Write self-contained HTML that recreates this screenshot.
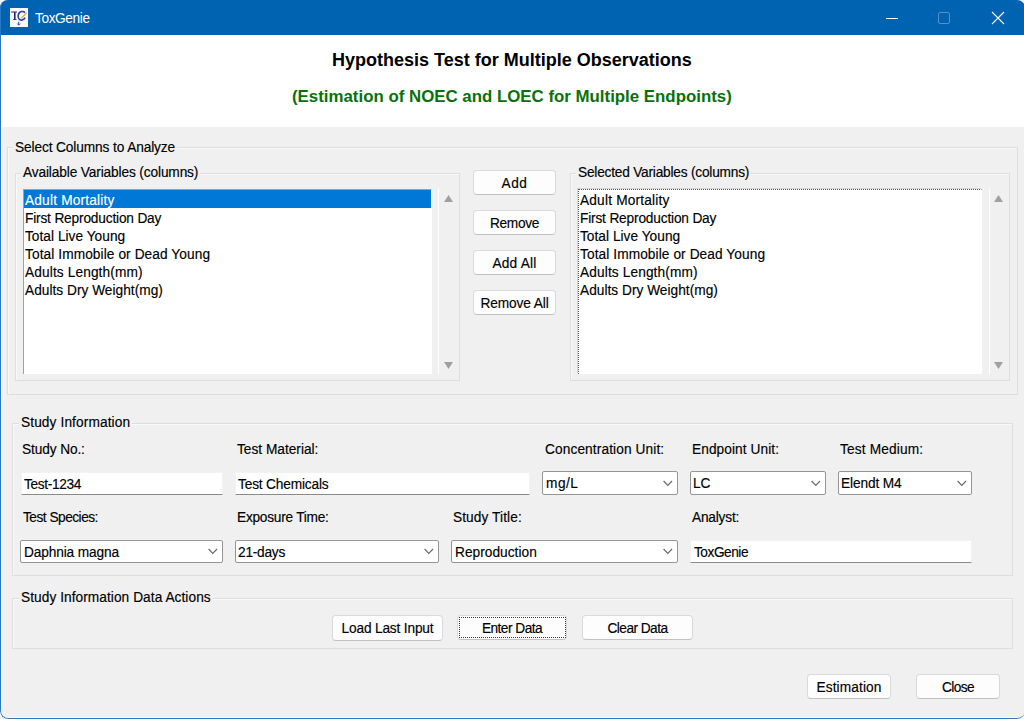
<!DOCTYPE html>
<html><head><meta charset="utf-8"><title>ToxGenie</title><style>
*{margin:0;padding:0;box-sizing:border-box}
html,body{width:1024px;height:719px;overflow:hidden;background:#f3f3f3}
body{position:relative;font-family:"Liberation Sans",sans-serif}
#win{position:absolute;left:0;top:0;width:1025px;height:719px;background:#f0f0f0;border-radius:8px;overflow:hidden}
#wb2{position:absolute;left:1px;top:35px;width:1024px;height:683px;border-radius:0 0 0 7px;border-left:1px solid #fbfbfb;border-bottom:1px solid #fbfbfb;z-index:9}
#wb{position:absolute;left:0;top:0;width:1025px;height:719px;border-radius:8px;border-left:1px solid #2a78c2;border-bottom:1px solid #2a78c2;z-index:10}
#tb{position:absolute;left:0;top:0;width:1025px;height:35px;background:#0063b1}
#hdr{position:absolute;left:1px;top:35px;width:1030px;height:92px;background:#fff}
.t{position:absolute;font-size:13.7px;line-height:13px;white-space:nowrap;color:#000;transform:scaleY(1.1);transform-origin:0 11px;-webkit-text-stroke:0.15px currentColor}
.h1{position:absolute;font-size:18px;line-height:18px;font-weight:bold;white-space:nowrap;color:#000}
.h2{position:absolute;font-size:16.85px;line-height:16.8px;font-weight:bold;white-space:nowrap;color:#0a700a}
.grp{position:absolute;border:1px solid #dedede;box-shadow:inset 1px 1px 0 #f9f9f9}
.gl{background:#f0f0f0;color:#000}
.lb{position:absolute;background:#fff;border-left:1px solid #a0a0a0;border-top:1px solid #a0a0a0;border-right:1px solid #fff}
.lbf{border-left:1px dotted #5a5a5a;border-top:1px dotted #5a5a5a;box-shadow:-1px -1px 0 rgba(160,160,160,.35)}
.sel{position:absolute;background:#0078d7}
.wl{position:absolute;background:#fff}
.arr{position:absolute}
.chev{position:absolute}
.btn{position:absolute;background:#fdfdfd;border:1px solid #d9d9d9;border-bottom-color:#c2c2c2;border-radius:4px;font-size:13.7px;line-height:13px;text-align:center;padding-top:6px;white-space:nowrap;color:#000}
.bt{display:inline-block;transform:scaleY(1.1);transform-origin:0 11px;-webkit-text-stroke:0.15px currentColor}
.focus{position:absolute;border:1px dotted #3a3a3a}
.ent{position:absolute;background:#fff;border:1px solid #f2f2f2;border-bottom:1px solid #8a8a8a;border-radius:2px 2px 0 0}
.cmb{position:absolute;background:#fff;border:1px solid #959595;border-radius:2px}
</style></head>
<body><div id="win">
<div id="tb"></div>
<svg style="position:absolute;left:10px;top:8px" width="18" height="19" viewBox="0 0 18 19"><rect width="18" height="19" fill="#fafbfc"/><path d="M1.2 3.4 H7 V4.6 H5.6 V11.2 H6.6 V11.9 H3 V11.2 H4 V4.6 H1.2Z" fill="#1d2b6c"/><path d="M15 4.6 C13.6 3 9.2 2.6 8.2 7 C7.6 10.6 9.6 12.6 12.2 12 C13.4 11.6 14.6 10.6 15 9.6" fill="none" stroke="#2a42a0" stroke-width="1.6"/><path d="M16.6 4.8 L11.3 10.2" stroke="#eaa45a" stroke-width="1.3"/><path d="M8.7 13.8 V16.8 M7.3 15.6 L8.7 17.2 L10.1 15.6" fill="none" stroke="#2a4ab0" stroke-width="1"/></svg>
<div class="t" style="left:35px;top:12px;color:#fff;letter-spacing:-0.4px;-webkit-text-stroke:0">ToxGenie</div>
<div style="position:absolute;left:886px;top:18px;width:12px;height:1px;background:#fff"></div>
<div style="position:absolute;left:938px;top:12px;width:12px;height:12px;border:1px solid #5b8fc7;border-radius:2px"></div>
<svg style="position:absolute;left:991px;top:11px" width="14" height="14" viewBox="0 0 14 14"><path d="M1 1 L13 13 M13 1 L1 13" stroke="#fff" stroke-width="1.1"/></svg>
<div id="hdr"></div>
<div class="h1" style="left:332px;top:51px">Hypothesis Test for Multiple Observations</div>
<div class="h2" style="left:292px;top:89px">(Estimation of NOEC and LOEC for Multiple Endpoints)</div>
<div class="grp" style="left:7px;top:147px;width:1011px;height:248px;"></div>
<div class="t gl" style="left:13px;top:141px;padding:0 2px;letter-spacing:-0.11px">Select Columns to Analyze</div>
<div class="grp" style="left:15px;top:173px;width:445px;height:208px;"></div>
<div class="t gl" style="left:21px;top:166px;padding:0 2px;letter-spacing:-0.13px">Available Variables (columns)</div>
<div class="grp" style="left:570px;top:173px;width:440px;height:208px;"></div>
<div class="t gl" style="left:576px;top:166px;padding:0 2px;letter-spacing:-0.21px">Selected Variables (columns)</div>
<div class="lb" style="left:23px;top:189px;width:409px;height:185px;"></div>
<div class="sel" style="left:24px;top:190px;width:407px;height:18px;"></div>
<div class="t" style="left:25px;top:193.5px;letter-spacing:0.19px;color:#fff">Adult Mortality</div>
<div class="t" style="left:25px;top:211.5px;letter-spacing:-0.17px;">First Reproduction Day</div>
<div class="t" style="left:25px;top:229.5px;letter-spacing:0.03px;">Total Live Young</div>
<div class="t" style="left:25px;top:247.5px;letter-spacing:0.09px;">Total Immobile or Dead Young</div>
<div class="t" style="left:25px;top:265.5px;letter-spacing:0.12px;">Adults Length(mm)</div>
<div class="t" style="left:25px;top:283.5px;letter-spacing:0.02px;">Adults Dry Weight(mg)</div>
<div class="wl" style="left:438px;top:188px;width:1px;height:186px;"></div>
<svg class="arr" style="left:444px;top:195px" width="9" height="7"><path d="M0 7 L4.5 0 L9 7Z" fill="#a0a0a0"/></svg>
<svg class="arr" style="left:444px;top:362px" width="9" height="7"><path d="M0 0 L4.5 7 L9 0Z" fill="#a0a0a0"/></svg>
<div class="lb lbf" style="left:578px;top:189px;width:404px;height:185px;"></div>
<div class="t" style="left:580px;top:193.5px;letter-spacing:0.19px;">Adult Mortality</div>
<div class="t" style="left:580px;top:211.5px;letter-spacing:-0.17px;">First Reproduction Day</div>
<div class="t" style="left:580px;top:229.5px;letter-spacing:0.03px;">Total Live Young</div>
<div class="t" style="left:580px;top:247.5px;letter-spacing:0.09px;">Total Immobile or Dead Young</div>
<div class="t" style="left:580px;top:265.5px;letter-spacing:0.12px;">Adults Length(mm)</div>
<div class="t" style="left:580px;top:283.5px;letter-spacing:0.02px;">Adults Dry Weight(mg)</div>
<div class="wl" style="left:989px;top:188px;width:1px;height:186px;"></div>
<svg class="arr" style="left:994px;top:195px" width="9" height="7"><path d="M0 7 L4.5 0 L9 7Z" fill="#a0a0a0"/></svg>
<svg class="arr" style="left:994px;top:362px" width="9" height="7"><path d="M0 0 L4.5 7 L9 0Z" fill="#a0a0a0"/></svg>
<div class="btn" style="left:473px;top:170px;width:83px;height:25px;"><span class="bt" style="letter-spacing:0.5px">Add</span></div>
<div class="btn" style="left:473px;top:210px;width:83px;height:25px;"><span class="bt" style="letter-spacing:-0.32px">Remove</span></div>
<div class="btn" style="left:473px;top:250px;width:83px;height:25px;"><span class="bt" style="letter-spacing:0.23px">Add All</span></div>
<div class="btn" style="left:473px;top:290px;width:83px;height:25px;"><span class="bt" style="letter-spacing:-0.1px">Remove All</span></div>
<div class="grp" style="left:12px;top:423px;width:1001px;height:153px;"></div>
<div class="t gl" style="left:19px;top:416px;padding:0 2px;letter-spacing:0.11px">Study Information</div>
<div class="t" style="left:22px;top:443px;letter-spacing:-0.11px;">Study No.:</div>
<div class="t" style="left:237px;top:443px;letter-spacing:0.0px;">Test Material:</div>
<div class="t" style="left:545px;top:443px;letter-spacing:0.11px;">Concentration Unit:</div>
<div class="t" style="left:692px;top:443px;letter-spacing:0.08px;">Endpoint Unit:</div>
<div class="t" style="left:840px;top:443px;letter-spacing:0.15px;">Test Medium:</div>
<div class="ent" style="left:21px;top:472px;width:202px;height:23px;"></div>
<div class="t" style="left:24px;top:477.5px;letter-spacing:-0.35px;">Test-1234</div>
<div class="ent" style="left:235px;top:472px;width:295px;height:23px;"></div>
<div class="t" style="left:238px;top:477.5px;letter-spacing:-0.16px;">Test Chemicals</div>
<div class="cmb" style="left:542px;top:471px;width:136px;height:24px;"></div>
<div class="t" style="left:546px;top:477px;letter-spacing:0.5px;">mg/L</div>
<svg class="chev" style="left:663px;top:480px" width="10" height="7" viewBox="0 0 10 7"><path d="M0.6 1 L4.8 5.4 L9 1" fill="none" stroke="#6a6a6a" stroke-width="1.2"/></svg>
<div class="cmb" style="left:690px;top:471px;width:136px;height:24px;"></div>
<div class="t" style="left:693px;top:477px;letter-spacing:0.0px;">LC</div>
<svg class="chev" style="left:811px;top:480px" width="10" height="7" viewBox="0 0 10 7"><path d="M0.6 1 L4.8 5.4 L9 1" fill="none" stroke="#6a6a6a" stroke-width="1.2"/></svg>
<div class="cmb" style="left:838px;top:471px;width:134px;height:24px;"></div>
<div class="t" style="left:841px;top:477px;letter-spacing:-0.12px;">Elendt M4</div>
<svg class="chev" style="left:957px;top:480px" width="10" height="7" viewBox="0 0 10 7"><path d="M0.6 1 L4.8 5.4 L9 1" fill="none" stroke="#6a6a6a" stroke-width="1.2"/></svg>
<div class="t" style="left:23px;top:511px;letter-spacing:-0.5px;">Test Species:</div>
<div class="t" style="left:237px;top:511px;letter-spacing:-0.25px;">Exposure Time:</div>
<div class="t" style="left:453px;top:511px;letter-spacing:0.09px;">Study Title:</div>
<div class="t" style="left:692px;top:511px;letter-spacing:-0.2px;">Analyst:</div>
<div class="cmb" style="left:20px;top:540px;width:203px;height:23px;"></div>
<div class="t" style="left:24px;top:546px;letter-spacing:-0.13px;">Daphnia magna</div>
<svg class="chev" style="left:208px;top:548px" width="10" height="7" viewBox="0 0 10 7"><path d="M0.6 1 L4.8 5.4 L9 1" fill="none" stroke="#6a6a6a" stroke-width="1.2"/></svg>
<div class="cmb" style="left:235px;top:540px;width:204px;height:23px;"></div>
<div class="t" style="left:238px;top:546px;letter-spacing:-0.23px;">21-days</div>
<svg class="chev" style="left:424px;top:548px" width="10" height="7" viewBox="0 0 10 7"><path d="M0.6 1 L4.8 5.4 L9 1" fill="none" stroke="#6a6a6a" stroke-width="1.2"/></svg>
<div class="cmb" style="left:451px;top:540px;width:227px;height:23px;"></div>
<div class="t" style="left:455px;top:546px;letter-spacing:0.03px;">Reproduction</div>
<svg class="chev" style="left:663px;top:548px" width="10" height="7" viewBox="0 0 10 7"><path d="M0.6 1 L4.8 5.4 L9 1" fill="none" stroke="#6a6a6a" stroke-width="1.2"/></svg>
<div class="ent" style="left:690px;top:540px;width:282px;height:23px;"></div>
<div class="t" style="left:694px;top:545.5px;letter-spacing:-0.47px;">ToxGenie</div>
<div class="grp" style="left:12px;top:598px;width:1001px;height:51px;"></div>
<div class="t gl" style="left:19px;top:591px;padding:0 2px;letter-spacing:0.06px">Study Information Data Actions</div>
<div class="btn" style="left:332px;top:615px;width:111px;height:26px;"><span class="bt" style="letter-spacing:-0.17px">Load Last Input</span></div>
<div class="btn" style="left:457px;top:615px;width:110px;height:25px;"><span class="bt" style="letter-spacing:-0.52px">Enter Data</span></div>
<div class="focus" style="left:459px;top:617px;width:107px;height:21px;"></div>
<div class="btn" style="left:582px;top:615px;width:111px;height:25px;"><span class="bt" style="letter-spacing:-0.55px">Clear Data</span></div>
<div class="btn" style="left:807px;top:674px;width:84px;height:25px;"><span class="bt" style="letter-spacing:0.11px">Estimation</span></div>
<div class="btn" style="left:916px;top:674px;width:84px;height:25px;"><span class="bt" style="letter-spacing:-0.55px">Close</span></div>
<div id="wb2"></div><div id="wb"></div></div></body></html>
